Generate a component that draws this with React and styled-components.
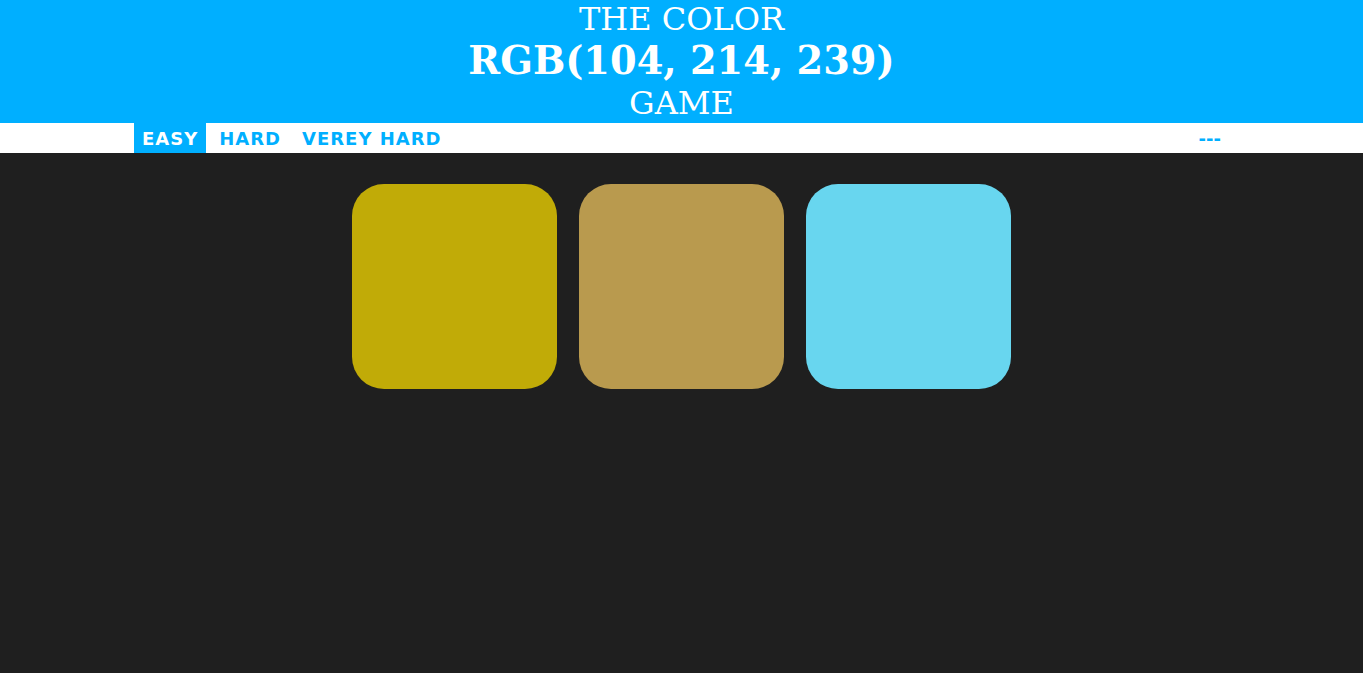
import React, { useState } from "react";
import styled, { createGlobalStyle } from "styled-components";

const Global = createGlobalStyle`
  html, body { margin: 0; padding: 0; background: #1f1f1f; }
  body { font-family: "DejaVu Serif", serif; }
`;

const Header = styled.header`
  background: #00afff;
  color: #fff;
  text-align: center;
  text-transform: uppercase;
  height: 123px;
  display: flex;
  flex-direction: column;
  align-items: center;
`;

const Line = styled.div`
  font-family: "DejaVu Serif", serif;
  font-size: ${(p) => p.$size}px;
  font-weight: ${(p) => (p.$bold ? 700 : 400)};
  line-height: ${(p) => p.$lh}px;
`;

const Bar = styled.nav`
  background: #fff;
  height: 30px;
`;

const BarInner = styled.div`
  width: 1095px;
  margin: 0 auto;
  height: 100%;
  display: flex;
  align-items: stretch;
`;

const Tab = styled.button`
  border: none;
  outline: none;
  margin: 0 5px 0 0;
  padding: 0 8px 0 8px;
  font-family: "DejaVu Sans", sans-serif;
  font-weight: 700;
  font-size: 18px;
  letter-spacing: 1px;
  text-transform: uppercase;
  background: ${(p) => (p.$active ? "#00afff" : "#fff")};
  color: ${(p) => (p.$active ? "#fff" : "#00afff")};
  cursor: pointer;
`;

const Message = styled.span`
  margin-left: auto;
  padding: 0 8px 0 8px;
  display: flex;
  align-items: center;
  font-family: "DejaVu Sans", sans-serif;
  font-weight: 700;
  font-size: 18px;
  color: #00afff;
`;

const Board = styled.main`
  display: flex;
  justify-content: center;
  gap: 22px;
  padding-top: 31px;
`;

const Square = styled.div`
  width: 205px;
  height: 205px;
  border-radius: 32px;
  background: ${(p) => p.$color};
`;

const colors = ["rgb(193, 171, 7)", "rgb(185, 154, 78)", "rgb(104, 214, 239)"];

export default function App() {
  const [mode, setMode] = useState("easy");
  return (
    <>
      <Global />
      <Header>
        <Line $size={32} $lh={38}>The Color</Line>
        <Line $size={38.3} $bold $lh={46}>rgb(104, 214, 239)</Line>
        <Line $size={32} $lh={38}>Game</Line>
      </Header>
      <Bar>
        <BarInner>
          <Tab $active={mode === "easy"} onClick={() => setMode("easy")}>Easy</Tab>
          <Tab $active={mode === "hard"} onClick={() => setMode("hard")}>Hard</Tab>
          <Tab $active={mode === "vhard"} onClick={() => setMode("vhard")}>Verey Hard</Tab>
          <Message>---</Message>
        </BarInner>
      </Bar>
      <Board>
        {colors.map((c) => (
          <Square key={c} $color={c} />
        ))}
      </Board>
    </>
  );
}
